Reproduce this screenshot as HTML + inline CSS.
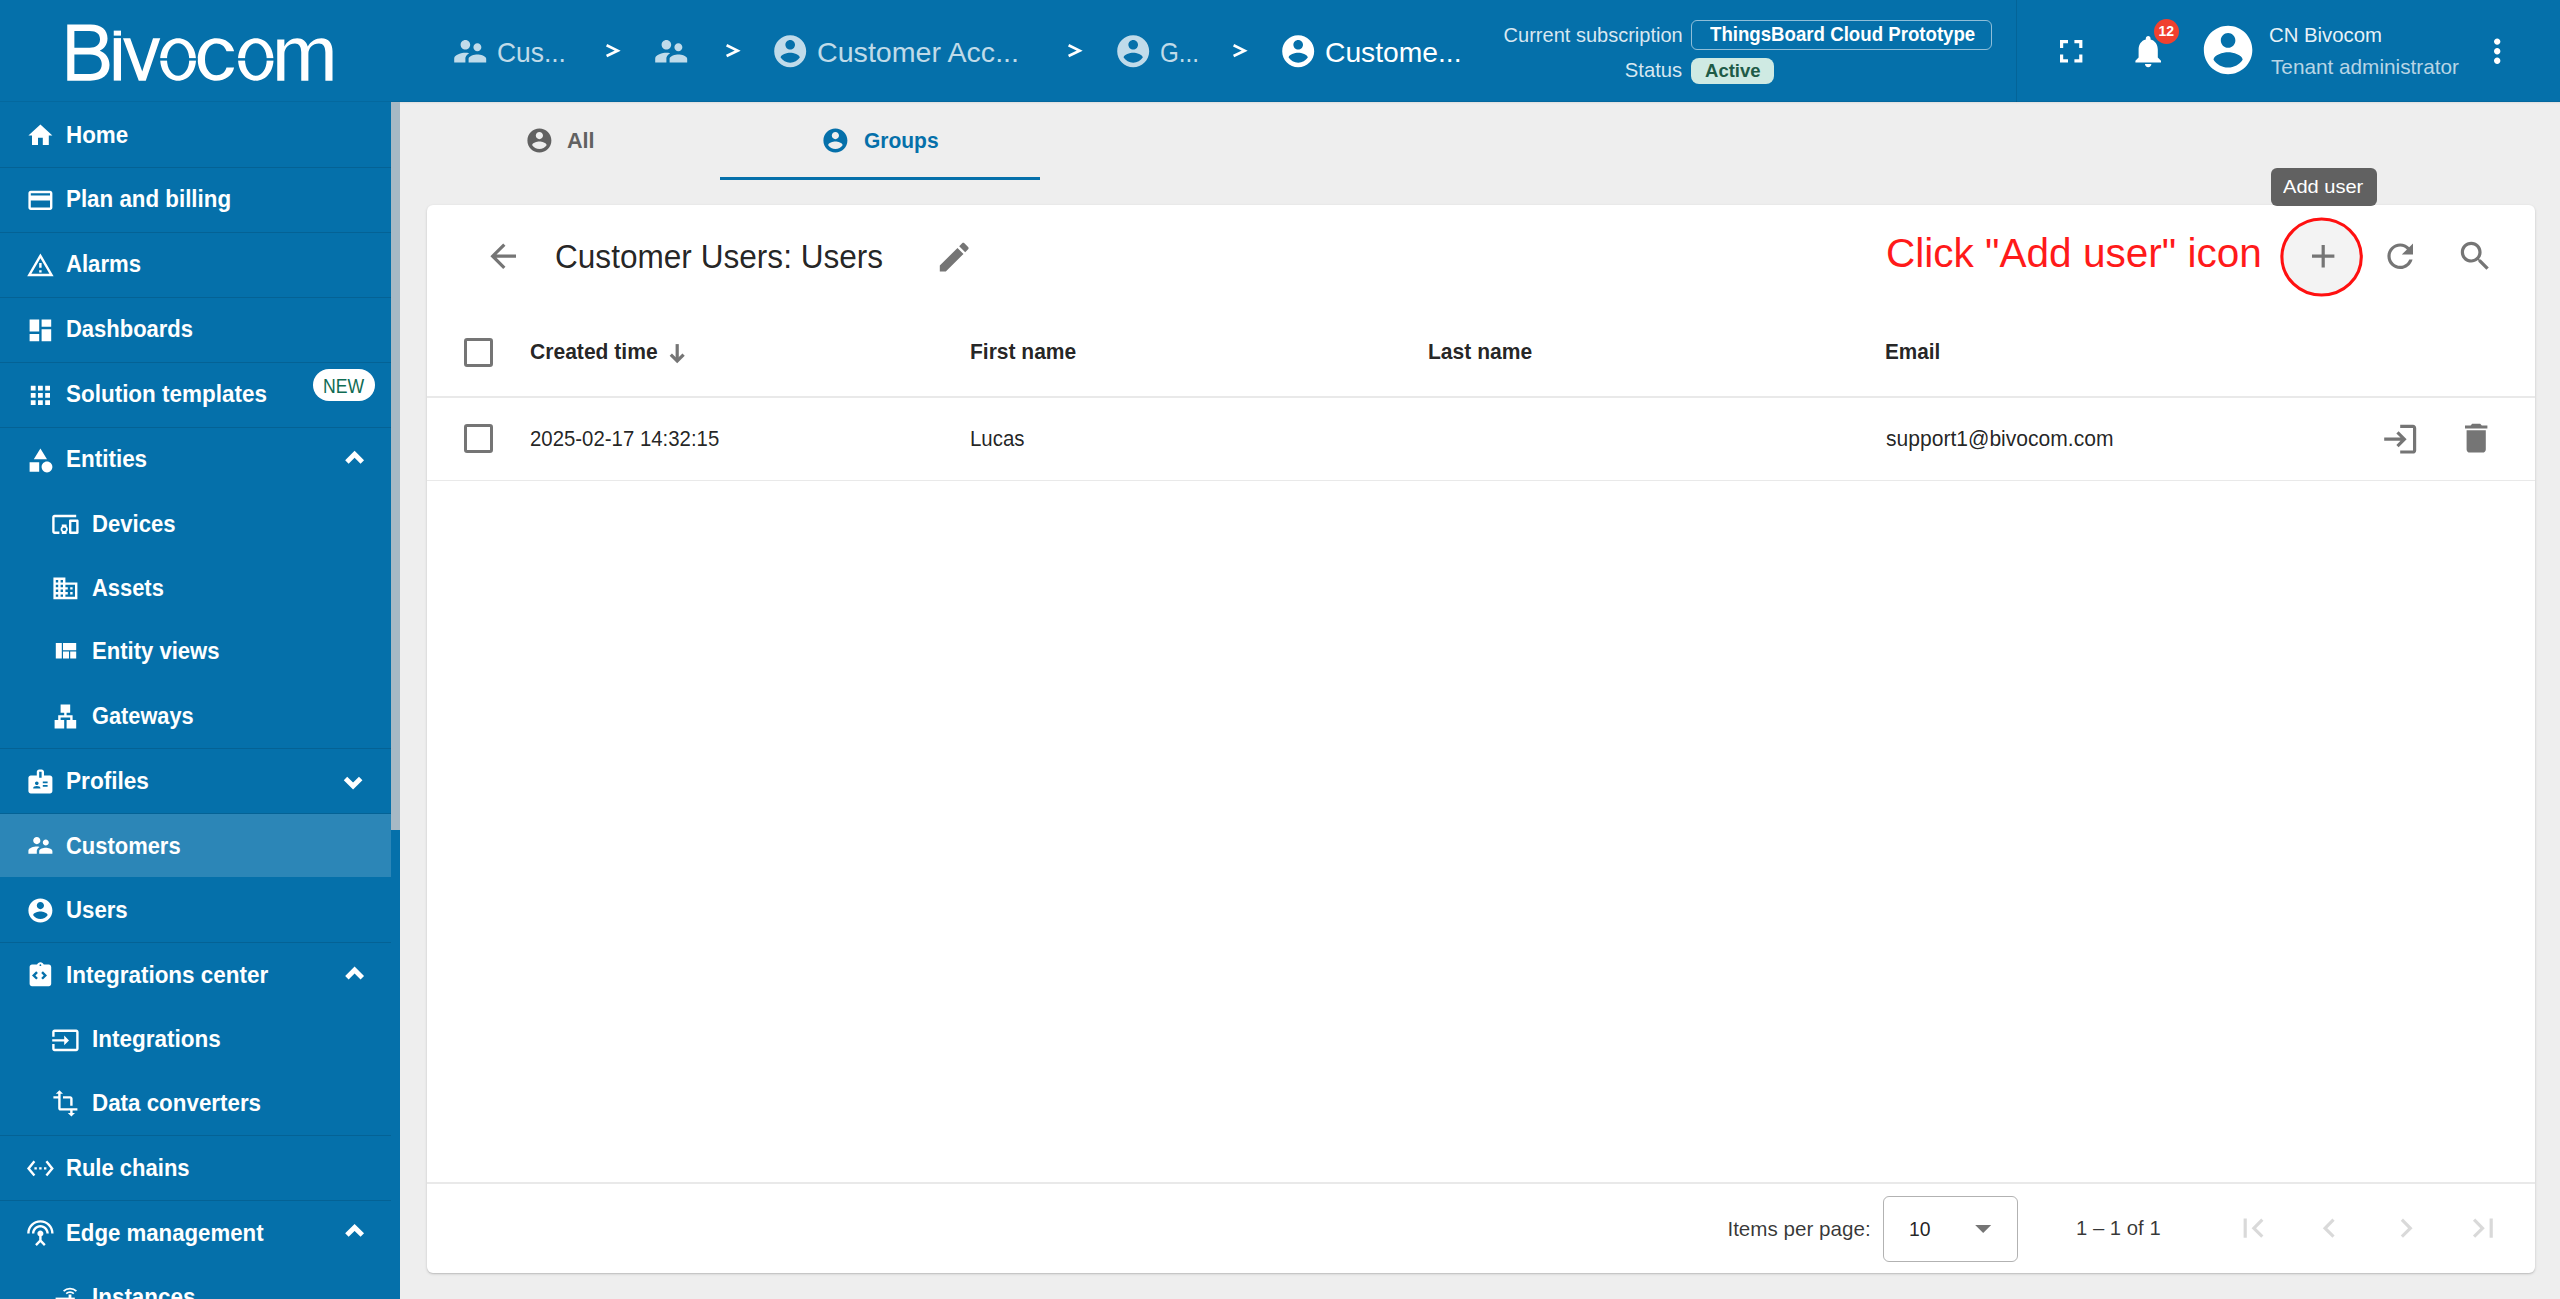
<!DOCTYPE html><html><head><meta charset="utf-8"><title>Customer Users</title><style>
html,body{margin:0;padding:0;width:2560px;height:1299px;overflow:hidden;background:#eeeeee;font-family:"Liberation Sans", sans-serif;}
.t{position:absolute;white-space:nowrap;}
.i{position:absolute;display:block;}
.r{position:absolute;}

</style></head><body>
<div class="r" style="left:0px;top:102px;width:400px;height:1197px;background:#0570aa;"></div>
<div class="r" style="left:391px;top:102px;width:9px;height:728px;background:#a7b9c5;"></div>
<div class="r" style="left:0px;top:167px;width:391px;height:1px;background:rgba(0,0,0,0.12);"></div>
<div class="r" style="left:0px;top:232px;width:391px;height:1px;background:rgba(0,0,0,0.12);"></div>
<div class="r" style="left:0px;top:297px;width:391px;height:1px;background:rgba(0,0,0,0.12);"></div>
<div class="r" style="left:0px;top:362px;width:391px;height:1px;background:rgba(0,0,0,0.12);"></div>
<div class="r" style="left:0px;top:427px;width:391px;height:1px;background:rgba(0,0,0,0.12);"></div>
<div class="r" style="left:0px;top:748px;width:391px;height:1px;background:rgba(0,0,0,0.12);"></div>
<div class="r" style="left:0px;top:812.6px;width:391px;height:1px;background:rgba(0,0,0,0.12);"></div>
<div class="r" style="left:0px;top:942px;width:391px;height:1px;background:rgba(0,0,0,0.12);"></div>
<div class="r" style="left:0px;top:1135px;width:391px;height:1px;background:rgba(0,0,0,0.12);"></div>
<div class="r" style="left:0px;top:1200px;width:391px;height:1px;background:rgba(0,0,0,0.12);"></div>
<div class="r" style="left:0px;top:813.6px;width:391px;height:63.6px;background:rgba(255,255,255,0.155);"></div>
<svg class="i" style="left:25.60px;top:121.10px;width:28.8px;height:28.8px;" viewBox="0 0 24 24"><path fill="#ffffff" d="M10 20v-6h4v6h5v-8h3L12 3 2 12h3v8z"/></svg>
<div class="t" style="left:66.2px;top:123.68px;font-size:23.3px;line-height:23.3px;color:#ffffff;font-weight:bold;transform:scaleX(0.9605);transform-origin:left top;">Home</div>
<svg class="i" style="left:25.60px;top:185.90px;width:28.8px;height:28.8px;" viewBox="0 0 24 24"><path fill="#ffffff" d="M20 4H4c-1.11 0-1.99.89-1.99 2L2 18c0 1.11.89 2 2 2h16c1.11 0 2-.89 2-2V6c0-1.11-.89-2-2-2zm0 14H4v-6h16v6zm0-10H4V6h16v2z"/></svg>
<div class="t" style="left:66.2px;top:188.48px;font-size:23.3px;line-height:23.3px;color:#ffffff;font-weight:bold;transform:scaleX(0.9588);transform-origin:left top;">Plan and billing</div>
<svg class="i" style="left:25.60px;top:250.80px;width:28.8px;height:28.8px;" viewBox="0 0 24 24"><path fill="#ffffff" d="M1 21h22L12 2 1 21zm3.47-2L12 5.99 19.53 19H4.47zM11 16h2v2h-2zm0-6h2v4h-2z"/></svg>
<div class="t" style="left:66.2px;top:253.38px;font-size:23.3px;line-height:23.3px;color:#ffffff;font-weight:bold;transform:scaleX(0.9488);transform-origin:left top;">Alarms</div>
<svg class="i" style="left:25.60px;top:315.70px;width:28.8px;height:28.8px;" viewBox="0 0 24 24"><path fill="#ffffff" d="M3 13h8V3H3v10zm0 8h8v-6H3v6zm10 0h8V11h-8v10zm0-18v6h8V3h-8z"/></svg>
<div class="t" style="left:66.2px;top:318.28px;font-size:23.3px;line-height:23.3px;color:#ffffff;font-weight:bold;transform:scaleX(0.9430);transform-origin:left top;">Dashboards</div>
<svg class="i" style="left:25.60px;top:380.60px;width:28.8px;height:28.8px;" viewBox="0 0 24 24"><path fill="#ffffff" d="M4 8h4V4H4v4zm6 12h4v-4h-4v4zm-6 0h4v-4H4v4zm0-6h4v-4H4v4zm6 0h4v-4h-4v4zm6-10v4h4V4h-4zm-6 4h4V4h-4v4zm6 6h4v-4h-4v4zm0 6h4v-4h-4v4z"/></svg>
<div class="t" style="left:66.2px;top:383.18px;font-size:23.3px;line-height:23.3px;color:#ffffff;font-weight:bold;transform:scaleX(0.9639);transform-origin:left top;">Solution templates</div>
<svg class="i" style="left:25.60px;top:445.90px;width:28.8px;height:28.8px;" viewBox="0 0 24 24"><path fill="#ffffff" d="M12 2l-5.5 9h11L12 2zm5.5 11c-2.49 0-4.5 2.01-4.5 4.5s2.01 4.5 4.5 4.5 4.5-2.01 4.5-4.5-2.01-4.5-4.5-4.5zM3 21.5h8v-8H3v8z"/></svg>
<div class="t" style="left:66.2px;top:448.48px;font-size:23.3px;line-height:23.3px;color:#ffffff;font-weight:bold;transform:scaleX(0.9640);transform-origin:left top;">Entities</div>
<svg class="i" style="left:25.60px;top:766.70px;width:28.8px;height:28.8px;" viewBox="0 0 24 24"><path fill="#ffffff" d="M20 7h-5V4c0-1.1-.9-2-2-2h-2c-1.1 0-2 .9-2 2v3H4c-1.1 0-2 .9-2 2v11c0 1.1.9 2 2 2h16c1.1 0 2-.9 2-2V9c0-1.1-.9-2-2-2zM9 12c.83 0 1.5.67 1.5 1.5S9.83 15 9 15s-1.5-.67-1.5-1.5S8.17 12 9 12zm3 6H6v-.43c0-.6.36-1.15.92-1.39.64-.28 1.34-.43 2.08-.43s1.44.15 2.08.43c.55.24.92.78.92 1.39V18zm1-9h-2V4h2v5zm5 7.5h-4V15h4v1.5zm0-3h-4V12h4v1.5z"/></svg>
<div class="t" style="left:66.2px;top:769.88px;font-size:23.3px;line-height:23.3px;color:#ffffff;font-weight:bold;transform:scaleX(0.9706);transform-origin:left top;">Profiles</div>
<svg class="i" style="left:25.60px;top:831.40px;width:28.8px;height:28.8px;" viewBox="0 0 24 24"><path fill="#ffffff" d="M16.5 12c1.38 0 2.49-1.12 2.49-2.5S17.88 7 16.5 7C15.12 7 14 8.12 14 9.5s1.12 2.5 2.5 2.5zM9 11c1.66 0 2.99-1.34 2.99-3S10.66 5 9 5C7.34 5 6 6.34 6 8s1.34 3 3 3zm7.5 3c-1.83 0-5.5.92-5.5 2.75V19h11v-2.25c0-1.83-3.67-2.75-5.5-2.75zM9 13c-2.33 0-7 1.17-7 3.5V19h7v-2.25c0-.85.33-2.34 2.37-3.47C10.5 13.1 9.66 13 9 13z"/></svg>
<div class="t" style="left:66.2px;top:834.58px;font-size:23.3px;line-height:23.3px;color:#ffffff;font-weight:bold;transform:scaleX(0.9415);transform-origin:left top;">Customers</div>
<svg class="i" style="left:25.60px;top:896.20px;width:28.8px;height:28.8px;" viewBox="0 0 24 24"><path fill="#ffffff" d="M12 2C6.48 2 2 6.48 2 12s4.48 10 10 10 10-4.48 10-10S17.52 2 12 2zm0 3c1.66 0 3 1.34 3 3s-1.34 3-3 3-3-1.34-3-3 1.34-3 3-3zm0 14.2c-2.5 0-4.71-1.28-6-3.22.03-1.99 4-3.08 6-3.08 1.99 0 5.97 1.09 6 3.08-1.29 1.94-3.5 3.22-6 3.22z"/></svg>
<div class="t" style="left:66.2px;top:899.38px;font-size:23.3px;line-height:23.3px;color:#ffffff;font-weight:bold;transform:scaleX(0.9531);transform-origin:left top;">Users</div>
<svg class="i" style="left:25.60px;top:961.20px;width:28.8px;height:28.8px;" viewBox="0 0 24 24"><path fill="#ffffff" d="M19 3h-4.18C14.4 1.84 13.3 1 12 1s-2.4.84-2.82 2H5c-1.1 0-2 .9-2 2v14c0 1.1.9 2 2 2h14c1.1 0 2-.9 2-2V5c0-1.1-.9-2-2-2zm-7-.25c.41 0 .75.34.75.75s-.34.75-.75.75-.75-.34-.75-.75.34-.75.75-.75zM9.91 14.09l-1.41 1.42L5 12l3.5-3.5 1.41 1.41L7.83 12l2.08 2.09zm4.18 1.42l-1.41-1.42L14.76 12l-2.08-2.09 1.41-1.41L17.5 12l-3.41 3.51z"/></svg>
<div class="t" style="left:66.2px;top:964.38px;font-size:23.3px;line-height:23.3px;color:#ffffff;font-weight:bold;transform:scaleX(0.9645);transform-origin:left top;">Integrations center</div>
<svg class="i" style="left:25.60px;top:1153.60px;width:28.8px;height:28.8px;" viewBox="0 0 24 24"><path fill="#ffffff" d="M7.77 6.76L6.23 5.48.82 12l5.41 6.52 1.54-1.28L3.42 12l4.35-5.24zM7 13h2v-2H7v2zm10-2h-2v2h2v-2zm-6 2h2v-2h-2v2zm6.77-7.52l-1.54 1.28L20.58 12l-4.35 5.24 1.54 1.28L23.18 12l-5.41-6.52z"/></svg>
<div class="t" style="left:66.2px;top:1156.78px;font-size:23.3px;line-height:23.3px;color:#ffffff;font-weight:bold;transform:scaleX(0.9452);transform-origin:left top;">Rule chains</div>
<svg class="i" style="left:25.60px;top:1218.90px;width:28.8px;height:28.8px;" viewBox="0 0 24 24"><path fill="#ffffff" d="M12 5c-3.87 0-7 3.13-7 7h2c0-2.76 2.24-5 5-5s5 2.24 5 5h2c0-3.87-3.13-7-7-7zm1 9.29c.88-.39 1.5-1.26 1.5-2.29 0-1.38-1.12-2.5-2.5-2.5S9.5 10.62 9.5 12c0 1.02.62 1.9 1.5 2.29v3.3L7.59 21 9 22.41l3-3 3 3L16.41 21 13 17.59v-3.3zM12 1C5.93 1 1 5.93 1 12h2c0-4.97 4.03-9 9-9s9 4.03 9 9h2c0-6.07-4.93-11-11-11z"/></svg>
<div class="t" style="left:66.2px;top:1222.08px;font-size:23.3px;line-height:23.3px;color:#ffffff;font-weight:bold;transform:scaleX(0.9537);transform-origin:left top;">Edge management</div>
<svg class="i" style="left:51.20px;top:510.10px;width:28.8px;height:28.8px;" viewBox="0 0 24 24"><path fill="#ffffff" d="M3 6h18V4H3c-1.1 0-2 .9-2 2v12c0 1.1.9 2 2 2h4v-2H3V6zm10 6H9v1.78c-.61.55-1 1.33-1 2.22s.39 1.67 1 2.22V20h4v-1.78c.61-.55 1-1.34 1-2.22s-.39-1.67-1-2.22V12zm-2 5.5c-.83 0-1.5-.67-1.5-1.5s.67-1.5 1.5-1.5 1.5.67 1.5 1.5-.67 1.5-1.5 1.5zM22 8h-6c-.5 0-1 .5-1 1v10c0 .5.5 1 1 1h6c.5 0 1-.5 1-1V9c0-.5-.5-1-1-1zm-1 10h-4v-8h4v8z"/></svg>
<div class="t" style="left:92.1px;top:512.68px;font-size:23.3px;line-height:23.3px;color:#ffffff;font-weight:bold;transform:scaleX(0.9481);transform-origin:left top;">Devices</div>
<svg class="i" style="left:51.20px;top:574.20px;width:28.8px;height:28.8px;" viewBox="0 0 24 24"><path fill="#ffffff" d="M12 7V3H2v18h20V7H12zM6 19H4v-2h2v2zm0-4H4v-2h2v2zm0-4H4V9h2v2zm0-4H4V5h2v2zm4 12H8v-2h2v2zm0-4H8v-2h2v2zm0-4H8V9h2v2zm0-4H8V5h2v2zm10 12h-8v-2h2v-2h-2v-2h2v-2h-2V9h8v10zm-2-8h-2v2h2v-2zm0 4h-2v2h2v-2z"/></svg>
<div class="t" style="left:92.1px;top:576.78px;font-size:23.3px;line-height:23.3px;color:#ffffff;font-weight:bold;transform:scaleX(0.9402);transform-origin:left top;">Assets</div>
<svg class="i" style="left:51.20px;top:637.40px;width:28.8px;height:28.8px;" viewBox="0 0 24 24"><path fill="#ffffff" d="M10 18h5v-6h-5v6zm-6 0h5V5H4v13zm12 0h5v-6h-5v6zM10 5v6h11V5H10z"/></svg>
<div class="t" style="left:92.1px;top:640.38px;font-size:23.3px;line-height:23.3px;color:#ffffff;font-weight:bold;transform:scaleX(0.9472);transform-origin:left top;">Entity views</div>
<svg class="i" style="left:51.20px;top:701.60px;width:28.8px;height:28.8px;" viewBox="0 0 24 24"><path fill="#ffffff" d="M13 22h8v-7h-3v-4h-5V9h3V2H8v7h3v2H6v4H3v7h8v-7H8v-2h8v2h-3z"/></svg>
<div class="t" style="left:92.1px;top:704.58px;font-size:23.3px;line-height:23.3px;color:#ffffff;font-weight:bold;transform:scaleX(0.9346);transform-origin:left top;">Gateways</div>
<svg class="i" style="left:51.20px;top:1025.50px;width:28.8px;height:28.8px;" viewBox="0 0 24 24"><path fill="#ffffff" d="M21 3.01H3c-1.1 0-2 .9-2 2V9h2V4.99h18v14.03H3V15H1v4.01c0 1.1.9 1.98 2 1.98h18c1.1 0 2-.88 2-1.98v-14c0-1.11-.9-2-2-2zM11 16l4-4-4-4v3H1v2h10v3z"/></svg>
<div class="t" style="left:92.1px;top:1028.48px;font-size:23.3px;line-height:23.3px;color:#ffffff;font-weight:bold;transform:scaleX(0.9662);transform-origin:left top;">Integrations</div>
<svg class="i" style="left:51.20px;top:1089.40px;width:28.8px;height:28.8px;" viewBox="0 0 24 24"><path fill="#ffffff" d="M22 18v-2H8V4h2L7 1 4 4h2v2H2v2h4v8c0 1.1.9 2 2 2h8v2h-2l3 3 3-3h-2v-2h4zM10 8h6v6h2V8c0-1.1-.9-2-2-2h-6v2z"/></svg>
<div class="t" style="left:92.1px;top:1092.38px;font-size:23.3px;line-height:23.3px;color:#ffffff;font-weight:bold;transform:scaleX(0.9599);transform-origin:left top;">Data converters</div>
<div class="t" style="left:92.1px;top:1286.38px;font-size:23.3px;line-height:23.3px;color:#ffffff;font-weight:bold;transform:scaleX(0.9623);transform-origin:left top;">Instances</div>
<svg class="i" style="left:0;top:0;width:400px;height:1299px" viewBox="0 0 400 1299"><path d="M63.6,1291.2 A9,9 0 0 1 76.4,1291.2" stroke="#fff" stroke-width="1.7" fill="none"/><path d="M66.2,1293.6 A5.4,5.4 0 0 1 73.8,1293.6" stroke="#fff" stroke-width="1.7" fill="none"/><rect x="68.6" y="1294.5" width="2.8" height="6" fill="#fff"/><rect x="55.6" y="1297.6" width="19.2" height="2.2" fill="#fff"/></svg>
<svg class="i" style="left:0;top:0;width:400px;height:1299px" viewBox="0 0 400 1299"><polyline points="346.9,462.0 354.6,454.3 362.3,462.0" fill="none" stroke="#fff" stroke-width="4.9" stroke-linejoin="miter" stroke-miterlimit="4"/></svg>
<svg class="i" style="left:0;top:0;width:400px;height:1299px" viewBox="0 0 400 1299"><polyline points="345.5,778.5 353.1,786.1 360.7,778.5" fill="none" stroke="#fff" stroke-width="4.9" stroke-linejoin="miter" stroke-miterlimit="4"/></svg>
<svg class="i" style="left:0;top:0;width:400px;height:1299px" viewBox="0 0 400 1299"><polyline points="346.9,977.7 354.6,970.0 362.3,977.7" fill="none" stroke="#fff" stroke-width="4.9" stroke-linejoin="miter" stroke-miterlimit="4"/></svg>
<svg class="i" style="left:0;top:0;width:400px;height:1299px" viewBox="0 0 400 1299"><polyline points="346.9,1235.1 354.6,1227.4 362.3,1235.1" fill="none" stroke="#fff" stroke-width="4.9" stroke-linejoin="miter" stroke-miterlimit="4"/></svg>
<div class="r" style="left:313px;top:369px;width:62px;height:32px;border-radius:16px;background:#fff;"></div>
<div class="t" style="left:323.3px;top:376.10px;font-size:20.2px;line-height:20.2px;color:#0f6b53;font-weight:normal;transform:scaleX(0.8743);transform-origin:left top;">NEW</div>
<div class="r" style="left:0px;top:0px;width:2560px;height:102px;background:#0570aa;"></div>
<div class="r" style="left:2016px;top:0px;width:1px;height:102px;background:rgba(0,0,0,0.10);"></div>
<div class="r" style="left:0px;top:101px;width:2560px;height:1px;background:rgba(0,0,0,0.07);"></div>
<div class="r" style="left:400px;top:102px;width:2160px;height:2px;background:linear-gradient(rgba(0,0,0,0.07),rgba(0,0,0,0));"></div>
<svg class="i" style="left:0;top:0;width:400px;height:102px" viewBox="0 0 400 102"><g transform="translate(40,10) scale(0.125)" fill="#fff" fill-rule="evenodd">
<path d="M218,115 H405 C492,115 540,158 540,228 C540,275 515,308 478,326 C528,345 556,388 556,440 C556,518 498,565 402,565 H218 Z M275,168 H398 C452,168 480,192 480,234 C480,278 448,302 398,302 H275 Z M275,355 H402 C460,355 494,385 494,432 C494,484 460,512 402,512 H275 Z"/>
<rect x="590" y="165" width="58" height="40"/><rect x="590" y="225" width="58" height="340"/>
<path d="M664,225 H722 L818,492 L904,225 H962 L846,565 H790 Z"/>
<path d="M1105,225 C1185,225 1248,300 1248,395 C1248,490 1185,565 1105,565 C1025,565 962,490 962,395 C962,300 1025,225 1105,225 Z M1105,265 C1055,265 1016,322 1016,395 C1016,468 1055,525 1105,525 C1155,525 1194,468 1194,395 C1194,322 1155,265 1105,265 Z"/>
<path d="M1553,330 H1492 C1478,290 1450,268 1412,268 C1358,268 1320,322 1320,395 C1320,468 1358,522 1412,522 C1452,522 1480,500 1492,460 H1553 C1538,525 1485,565 1410,565 C1322,565 1262,490 1262,395 C1262,300 1322,225 1410,225 C1485,225 1538,268 1553,330 Z"/>
<path d="M1727,225 C1807,225 1868,300 1868,395 C1868,490 1807,565 1727,565 C1647,565 1585,490 1585,395 C1585,300 1647,225 1727,225 Z M1727,265 C1677,265 1640,322 1640,395 C1640,468 1677,525 1727,525 C1777,525 1814,468 1814,395 C1814,322 1777,265 1727,265 Z"/>
<path d="M1898,235 H1955 V292 C1975,250 2012,225 2058,225 C2102,225 2130,250 2142,292 C2165,250 2205,225 2252,225 C2310,225 2340,265 2340,330 V565 H2283 V340 C2283,292 2265,268 2232,268 C2180,268 2147,305 2147,352 V565 H2090 V340 C2090,292 2072,268 2040,268 C1990,268 1955,305 1955,352 V565 H1898 Z"/>
</g>
<g transform="translate(40,10) scale(0.125)" fill="#0570aa"><rect x="950" y="385" width="80" height="20"/><rect x="1180" y="385" width="80" height="20"/><rect x="1575" y="385" width="80" height="20"/><rect x="1800" y="385" width="80" height="20"/></g></svg>
<svg class="i" style="left:450.50px;top:32.00px;width:38.4px;height:38.4px;" viewBox="0 0 24 24"><path fill="rgba(255,255,255,0.75)" d="M16.5 12c1.38 0 2.49-1.12 2.49-2.5S17.88 7 16.5 7C15.12 7 14 8.12 14 9.5s1.12 2.5 2.5 2.5zM9 11c1.66 0 2.99-1.34 2.99-3S10.66 5 9 5C7.34 5 6 6.34 6 8s1.34 3 3 3zm7.5 3c-1.83 0-5.5.92-5.5 2.75V19h11v-2.25c0-1.83-3.67-2.75-5.5-2.75zM9 13c-2.33 0-7 1.17-7 3.5V19h7v-2.25c0-.85.33-2.34 2.37-3.47C10.5 13.1 9.66 13 9 13z"/></svg>
<div class="t" style="left:496.5px;top:39.48px;font-size:27.2px;line-height:27.2px;color:rgba(255,255,255,0.75);font-weight:normal;transform:scaleX(0.9711);transform-origin:left top;">Cus...</div>
<svg class="i" style="left:651.60px;top:32.00px;width:38.4px;height:38.4px;" viewBox="0 0 24 24"><path fill="rgba(255,255,255,0.75)" d="M16.5 12c1.38 0 2.49-1.12 2.49-2.5S17.88 7 16.5 7C15.12 7 14 8.12 14 9.5s1.12 2.5 2.5 2.5zM9 11c1.66 0 2.99-1.34 2.99-3S10.66 5 9 5C7.34 5 6 6.34 6 8s1.34 3 3 3zm7.5 3c-1.83 0-5.5.92-5.5 2.75V19h11v-2.25c0-1.83-3.67-2.75-5.5-2.75zM9 13c-2.33 0-7 1.17-7 3.5V19h7v-2.25c0-.85.33-2.34 2.37-3.47C10.5 13.1 9.66 13 9 13z"/></svg>
<svg class="i" style="left:771.30px;top:32.00px;width:38.4px;height:38.4px;" viewBox="0 0 24 24"><path fill="rgba(255,255,255,0.75)" d="M12 2C6.48 2 2 6.48 2 12s4.48 10 10 10 10-4.48 10-10S17.52 2 12 2zm0 3c1.66 0 3 1.34 3 3s-1.34 3-3 3-3-1.34-3-3 1.34-3 3-3zm0 14.2c-2.5 0-4.71-1.28-6-3.22.03-1.99 4-3.08 6-3.08 1.99 0 5.97 1.09 6 3.08-1.29 1.94-3.5 3.22-6 3.22z"/></svg>
<div class="t" style="left:817px;top:39.48px;font-size:27.2px;line-height:27.2px;color:rgba(255,255,255,0.75);font-weight:normal;transform:scaleX(1.0528);transform-origin:left top;">Customer Acc...</div>
<svg class="i" style="left:1114.40px;top:32.00px;width:38.4px;height:38.4px;" viewBox="0 0 24 24"><path fill="rgba(255,255,255,0.75)" d="M12 2C6.48 2 2 6.48 2 12s4.48 10 10 10 10-4.48 10-10S17.52 2 12 2zm0 3c1.66 0 3 1.34 3 3s-1.34 3-3 3-3-1.34-3-3 1.34-3 3-3zm0 14.2c-2.5 0-4.71-1.28-6-3.22.03-1.99 4-3.08 6-3.08 1.99 0 5.97 1.09 6 3.08-1.29 1.94-3.5 3.22-6 3.22z"/></svg>
<div class="t" style="left:1159.5px;top:39.48px;font-size:27.2px;line-height:27.2px;color:rgba(255,255,255,0.75);font-weight:normal;transform:scaleX(0.8906);transform-origin:left top;">G...</div>
<svg class="i" style="left:1279.00px;top:32.00px;width:38.4px;height:38.4px;" viewBox="0 0 24 24"><path fill="#ffffff" d="M12 2C6.48 2 2 6.48 2 12s4.48 10 10 10 10-4.48 10-10S17.52 2 12 2zm0 3c1.66 0 3 1.34 3 3s-1.34 3-3 3-3-1.34-3-3 1.34-3 3-3zm0 14.2c-2.5 0-4.71-1.28-6-3.22.03-1.99 4-3.08 6-3.08 1.99 0 5.97 1.09 6 3.08-1.29 1.94-3.5 3.22-6 3.22z"/></svg>
<div class="t" style="left:1324.5px;top:39.48px;font-size:27.2px;line-height:27.2px;color:#ffffff;font-weight:normal;transform:scaleX(1.0388);transform-origin:left top;">Custome...</div>
<svg class="i" style="left:604.0px;top:40px;width:18px;height:22px" viewBox="604.0 40 18 22"><polyline points="606.6,45.3 617.6,50.65 606.6,56" fill="none" stroke="#fff" stroke-width="2.7" stroke-linejoin="miter"/></svg>
<svg class="i" style="left:723.6px;top:40px;width:18px;height:22px" viewBox="723.6 40 18 22"><polyline points="726.2,45.3 737.2,50.65 726.2,56" fill="none" stroke="#fff" stroke-width="2.7" stroke-linejoin="miter"/></svg>
<svg class="i" style="left:1066.4px;top:40px;width:18px;height:22px" viewBox="1066.4 40 18 22"><polyline points="1069.0,45.3 1080.0,50.65 1069.0,56" fill="none" stroke="#fff" stroke-width="2.7" stroke-linejoin="miter"/></svg>
<svg class="i" style="left:1231.0px;top:40px;width:18px;height:22px" viewBox="1231.0 40 18 22"><polyline points="1233.6,45.3 1244.6,50.65 1233.6,56" fill="none" stroke="#fff" stroke-width="2.7" stroke-linejoin="miter"/></svg>
<div class="t" style="right:877px;top:24.80px;font-size:20.2px;line-height:20.2px;color:rgba(255,255,255,0.85);font-weight:normal;transform:scaleX(0.9911);transform-origin:right top;">Current subscription</div>
<div class="r" style="left:1691px;top:19.5px;width:299px;height:28.5px;border:1px solid rgba(255,255,255,0.55);border-radius:6px;"></div>
<div class="t" style="left:1709.5px;top:24.39px;font-size:20.8px;line-height:20.8px;color:#ffffff;font-weight:bold;transform:scaleX(0.8968);transform-origin:left top;">ThingsBoard Cloud Prototype</div>
<div class="t" style="right:878px;top:60.30px;font-size:20.2px;line-height:20.2px;color:rgba(255,255,255,0.85);font-weight:normal;transform:scaleX(1.0022);transform-origin:right top;">Status</div>
<div class="r" style="left:1691px;top:58px;width:83px;height:26px;border-radius:8px;background:#cfeae3;"></div>
<div class="t" style="left:1705px;top:61.35px;font-size:19.2px;line-height:19.2px;color:#1e5b47;font-weight:bold;transform:scaleX(0.9662);transform-origin:left top;">Active</div>
<svg class="i" style="left:2051.80px;top:31.80px;width:38.4px;height:38.4px;" viewBox="0 0 24 24"><path fill="#ffffff" d="M7 14H5v5h5v-2H7v-3zm-2-4h2V7h3V5H5v5zm12 7h-3v2h5v-5h-2v3zM14 5v2h3v3h2V5h-5z"/></svg>
<svg class="i" style="left:2128.60px;top:32.20px;width:38.4px;height:38.4px;" viewBox="0 0 24 24"><path fill="#ffffff" d="M12 22c1.1 0 2-.9 2-2h-4c0 1.1.89 2 2 2zm6-6v-5c0-3.07-1.64-5.64-4.5-6.32V4c0-.83-.67-1.5-1.5-1.5s-1.5.67-1.5 1.5v.68C7.63 5.36 6 7.92 6 11v5l-2 2v1h16v-1l-2-2z"/></svg>
<div class="r" style="left:2154.3px;top:19.3px;width:25px;height:25px;border-radius:50%;background:#f0412f;"></div>
<div class="t" style="left:2158.5px;top:24.35px;font-size:14px;line-height:14px;color:#ffffff;font-weight:bold;">12</div>
<svg class="i" style="left:2198.70px;top:21.20px;width:58.2px;height:58.2px;" viewBox="0 0 24 24"><path fill="#ffffff" d="M12 2C6.48 2 2 6.48 2 12s4.48 10 10 10 10-4.48 10-10S17.52 2 12 2zm0 3c1.66 0 3 1.34 3 3s-1.34 3-3 3-3-1.34-3-3 1.34-3 3-3zm0 14.2c-2.5 0-4.71-1.28-6-3.22.03-1.99 4-3.08 6-3.08 1.99 0 5.97 1.09 6 3.08-1.29 1.94-3.5 3.22-6 3.22z"/></svg>
<div class="t" style="left:2269.2px;top:25.09px;font-size:20.8px;line-height:20.8px;color:rgba(255,255,255,0.92);font-weight:normal;transform:scaleX(0.9782);transform-origin:left top;">CN Bivocom</div>
<div class="t" style="left:2270.5px;top:57.19px;font-size:20.8px;line-height:20.8px;color:rgba(255,255,255,0.72);font-weight:normal;transform:scaleX(0.9973);transform-origin:left top;">Tenant administrator</div>
<svg class="i" style="left:2477.80px;top:32.20px;width:38.4px;height:38.4px;" viewBox="0 0 24 24"><path fill="#ffffff" d="M12 8c1.1 0 2-.9 2-2s-.9-2-2-2-2 .9-2 2 .9 2 2 2zm0 2c-1.1 0-2 .9-2 2s.9 2 2 2 2-.9 2-2-.9-2-2-2zm0 6c-1.1 0-2 .9-2 2s.9 2 2 2 2-.9 2-2-.9-2-2-2z"/></svg>
<svg class="i" style="left:525.00px;top:126.10px;width:28.8px;height:28.8px;" viewBox="0 0 24 24"><path fill="#616161" d="M12 2C6.48 2 2 6.48 2 12s4.48 10 10 10 10-4.48 10-10S17.52 2 12 2zm0 3c1.66 0 3 1.34 3 3s-1.34 3-3 3-3-1.34-3-3 1.34-3 3-3zm0 14.2c-2.5 0-4.71-1.28-6-3.22.03-1.99 4-3.08 6-3.08 1.99 0 5.97 1.09 6 3.08-1.29 1.94-3.5 3.22-6 3.22z"/></svg>
<div class="t" style="left:567px;top:129.64px;font-size:22.4px;line-height:22.4px;color:#616161;font-weight:bold;transform:scaleX(0.9649);transform-origin:left top;">All</div>
<svg class="i" style="left:821.40px;top:126.10px;width:28.8px;height:28.8px;" viewBox="0 0 24 24"><path fill="#0570aa" d="M12 2C6.48 2 2 6.48 2 12s4.48 10 10 10 10-4.48 10-10S17.52 2 12 2zm0 3c1.66 0 3 1.34 3 3s-1.34 3-3 3-3-1.34-3-3 1.34-3 3-3zm0 14.2c-2.5 0-4.71-1.28-6-3.22.03-1.99 4-3.08 6-3.08 1.99 0 5.97 1.09 6 3.08-1.29 1.94-3.5 3.22-6 3.22z"/></svg>
<div class="t" style="left:863.5px;top:129.64px;font-size:22.4px;line-height:22.4px;color:#0570aa;font-weight:bold;transform:scaleX(0.9368);transform-origin:left top;">Groups</div>
<div class="r" style="left:720px;top:176.6px;width:320px;height:3.2px;background:#0570aa;"></div>
<div class="r" style="left:427px;top:205px;width:2108px;height:1068px;background:#fff;border-radius:6px;box-shadow:0 1px 3px rgba(0,0,0,0.16),0 1px 1px rgba(0,0,0,0.08);"></div>
<svg class="i" style="left:484.40px;top:237.40px;width:38.4px;height:38.4px;" viewBox="0 0 24 24"><path fill="#757575" d="M20 11H7.83l5.59-5.59L12 4l-8 8 8 8 1.41-1.41L7.83 13H20v-2z"/></svg>
<div class="t" style="left:554.8px;top:240.03px;font-size:33.4px;line-height:33.4px;color:rgba(0,0,0,0.87);font-weight:normal;transform:scaleX(0.9458);transform-origin:left top;">Customer Users: Users</div>
<svg class="i" style="left:935.30px;top:237.60px;width:38.4px;height:38.4px;" viewBox="0 0 24 24"><path fill="#757575" d="M3 17.25V21h3.75L17.81 9.94l-3.75-3.75L3 17.25zM20.71 7.04c.39-.39.39-1.02 0-1.41l-2.34-2.34c-.39-.39-1.02-.39-1.41 0l-1.83 1.83 3.75 3.75 1.83-1.83z"/></svg>
<div class="t" style="left:1886px;top:232.84px;font-size:40px;line-height:40px;color:#ff1a1a;font-weight:normal;transform:scaleX(1.0136);transform-origin:left top;">Click &quot;Add user&quot; icon</div>
<svg class="i" style="left:2270px;top:207px;width:104px;height:100px" viewBox="2270 207 104 100"><ellipse cx="2321.6" cy="257" rx="39.7" ry="38" fill="#f3f3f3" stroke="#ff1010" stroke-width="3.1"/></svg>
<svg class="i" style="left:2303.80px;top:237.30px;width:38.4px;height:38.4px;" viewBox="0 0 24 24"><path fill="#757575" d="M19 13h-6v6h-2v-6H5v-2h6V5h2v6h6v2z"/></svg>
<svg class="i" style="left:2380.80px;top:237.30px;width:38.4px;height:38.4px;" viewBox="0 0 24 24"><path fill="#757575" d="M17.65 6.35C16.2 4.9 14.21 4 12 4c-4.42 0-7.99 3.58-7.99 8s3.57 8 7.99 8c3.73 0 6.84-2.55 7.73-6h-2.08c-.82 2.33-3.04 4-5.65 4-3.31 0-6-2.69-6-6s2.69-6 6-6c1.66 0 3.14.69 4.22 1.78L13 11h7V4l-2.35 2.35z"/></svg>
<svg class="i" style="left:2456.40px;top:236.80px;width:38.4px;height:38.4px;" viewBox="0 0 24 24"><path fill="#757575" d="M15.5 14h-.79l-.28-.27C15.41 12.59 16 11.11 16 9.5 16 5.91 13.09 3 9.5 3S3 5.91 3 9.5 5.91 16 9.5 16c1.61 0 3.09-.59 4.23-1.57l.27.28v.79l5 4.99L20.49 19l-4.99-5zm-6 0C7.01 14 5 11.99 5 9.5S7.01 5 9.5 5 14 7.01 14 9.5 11.99 14 9.5 14z"/></svg>
<div class="r" style="left:2270.5px;top:168px;width:106px;height:37.6px;border-radius:6px;background:#616161;"></div>
<div class="t" style="left:2283.2px;top:177.25px;font-size:19.2px;line-height:19.2px;color:#ffffff;font-weight:normal;transform:scaleX(1.0455);transform-origin:left top;">Add user</div>
<div class="r" style="left:463.5px;top:338px;width:29px;height:29px;border:3.2px solid rgba(0,0,0,0.54);border-radius:3px;box-sizing:border-box;"></div>
<div class="t" style="left:529.5px;top:341.04px;font-size:22.4px;line-height:22.4px;color:rgba(0,0,0,0.87);font-weight:bold;transform:scaleX(0.9412);transform-origin:left top;">Created time</div>
<svg class="i" style="left:660px;top:340px;width:34px;height:28px" viewBox="660 340 34 28"><rect x="675.6" y="344.1" width="3.2" height="15" fill="#757575"/><polyline points="670.8,354.6 677.2,361 683.6,354.6" fill="none" stroke="#757575" stroke-width="3.2"/></svg>
<div class="t" style="left:970px;top:341.04px;font-size:22.4px;line-height:22.4px;color:rgba(0,0,0,0.87);font-weight:bold;transform:scaleX(0.9382);transform-origin:left top;">First name</div>
<div class="t" style="left:1427.9px;top:341.04px;font-size:22.4px;line-height:22.4px;color:rgba(0,0,0,0.87);font-weight:bold;transform:scaleX(0.9409);transform-origin:left top;">Last name</div>
<div class="t" style="left:1884.8px;top:341.04px;font-size:22.4px;line-height:22.4px;color:rgba(0,0,0,0.87);font-weight:bold;transform:scaleX(0.9268);transform-origin:left top;">Email</div>
<div class="r" style="left:427px;top:396px;width:2108px;height:1.6px;background:rgba(0,0,0,0.085);"></div>
<div class="r" style="left:463.5px;top:424.4px;width:29px;height:29px;border:3.2px solid rgba(0,0,0,0.54);border-radius:3px;box-sizing:border-box;"></div>
<div class="t" style="left:529.5px;top:428.45px;font-size:21.8px;line-height:21.8px;color:rgba(0,0,0,0.87);font-weight:normal;transform:scaleX(0.9349);transform-origin:left top;">2025-02-17 14:32:15</div>
<div class="t" style="left:970px;top:428.45px;font-size:21.8px;line-height:21.8px;color:rgba(0,0,0,0.87);font-weight:normal;transform:scaleX(0.9379);transform-origin:left top;">Lucas</div>
<div class="t" style="left:1885.5px;top:428.45px;font-size:21.8px;line-height:21.8px;color:rgba(0,0,0,0.87);font-weight:normal;transform:scaleX(0.9667);transform-origin:left top;">support1@bivocom.com</div>
<svg class="i" style="left:2380.60px;top:419.70px;width:38.4px;height:38.4px;" viewBox="0 0 24 24"><path fill="#757575" d="M11 7L9.6 8.4l2.6 2.6H2v2h10.2l-2.6 2.6L11 17l5-5-5-5zm9 12h-8v2h8c1.1 0 2-.9 2-2V5c0-1.1-.9-2-2-2h-8v2h8v14z"/></svg>
<svg class="i" style="left:2457.30px;top:419.20px;width:38.4px;height:38.4px;" viewBox="0 0 24 24"><path fill="#757575" d="M6 19c0 1.1.9 2 2 2h8c1.1 0 2-.9 2-2V7H6v12zM19 4h-3.5l-1-1h-5l-1 1H5v2h14V4z"/></svg>
<div class="r" style="left:427px;top:479.5px;width:2108px;height:1.6px;background:rgba(0,0,0,0.085);"></div>
<div class="r" style="left:427px;top:1182px;width:2108px;height:1.6px;background:rgba(0,0,0,0.085);"></div>
<div class="t" style="right:689.2px;top:1218.63px;font-size:20.4px;line-height:20.4px;color:rgba(0,0,0,0.78);font-weight:normal;transform:scaleX(1.0112);transform-origin:right top;">Items per page:</div>
<div class="r" style="left:1883.2px;top:1196.3px;width:134.4px;height:65.4px;border:1.6px solid rgba(0,0,0,0.30);border-radius:6px;box-sizing:border-box;"></div>
<div class="t" style="left:1908.5px;top:1219.19px;font-size:20.8px;line-height:20.8px;color:rgba(0,0,0,0.87);font-weight:normal;transform:scaleX(0.9329);transform-origin:left top;">10</div>
<svg class="i" style="left:1964.30px;top:1209.30px;width:38.4px;height:38.4px;" viewBox="0 0 24 24"><path fill="#757575" d="M7 10l5 5 5-5z"/></svg>
<div class="t" style="left:2076px;top:1218.39px;font-size:20.8px;line-height:20.8px;color:rgba(0,0,0,0.78);font-weight:normal;transform:scaleX(0.9765);transform-origin:left top;">1 – 1 of 1</div>
<svg class="i" style="left:2233.60px;top:1209.40px;width:38.4px;height:38.4px;" viewBox="0 0 24 24"><path fill="rgba(0,0,0,0.15)" d="M18.41 16.59L13.82 12l4.59-4.59L17 6l-6 6 6 6zM6 6h2v12H6z"/></svg>
<svg class="i" style="left:2310.30px;top:1209.40px;width:38.4px;height:38.4px;" viewBox="0 0 24 24"><path fill="rgba(0,0,0,0.15)" d="M15.41 7.41L14 6l-6 6 6 6 1.41-1.41L10.83 12z"/></svg>
<svg class="i" style="left:2387.30px;top:1209.40px;width:38.4px;height:38.4px;" viewBox="0 0 24 24"><path fill="rgba(0,0,0,0.15)" d="M10 6L8.59 7.41 13.17 12l-4.58 4.59L10 18l6-6z"/></svg>
<svg class="i" style="left:2463.50px;top:1209.40px;width:38.4px;height:38.4px;" viewBox="0 0 24 24"><path fill="rgba(0,0,0,0.15)" d="M5.59 7.41L10.18 12l-4.59 4.59L7 18l6-6-6-6zM16 6h2v12h-2z"/></svg>
</body></html>
